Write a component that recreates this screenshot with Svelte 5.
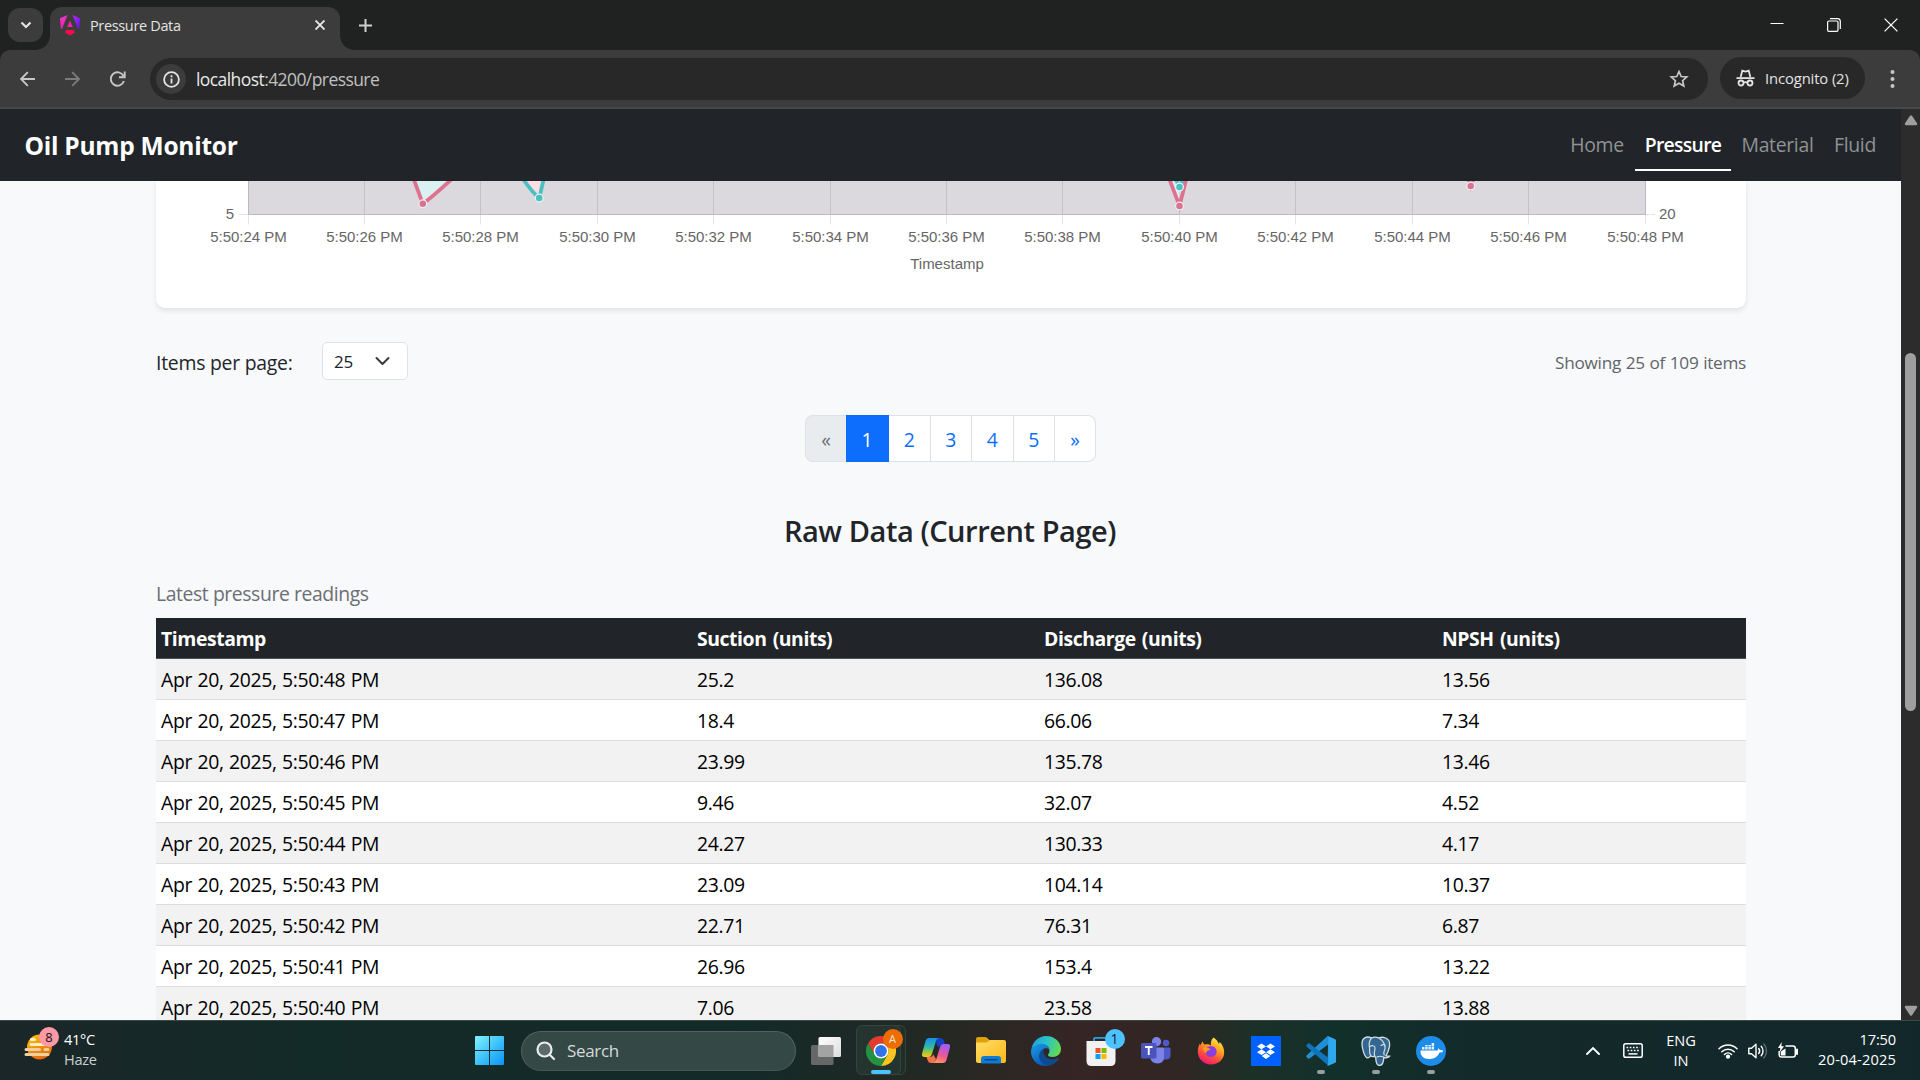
<script>
  const rows = [
    ['Apr 20, 2025, 5:50:48 PM', '25.2', '136.08', '13.56'],
    ['Apr 20, 2025, 5:50:47 PM', '18.4', '66.06', '7.34'],
    ['Apr 20, 2025, 5:50:46 PM', '23.99', '135.78', '13.46'],
    ['Apr 20, 2025, 5:50:45 PM', '9.46', '32.07', '4.52'],
    ['Apr 20, 2025, 5:50:44 PM', '24.27', '130.33', '4.17'],
    ['Apr 20, 2025, 5:50:43 PM', '23.09', '104.14', '10.37'],
    ['Apr 20, 2025, 5:50:42 PM', '22.71', '76.31', '6.87'],
    ['Apr 20, 2025, 5:50:41 PM', '26.96', '153.4', '13.22'],
    ['Apr 20, 2025, 5:50:40 PM', '7.06', '23.58', '13.88']
  ];
  const headers = ['Timestamp', 'Suction (units)', 'Discharge (units)', 'NPSH (units)'];
  const pages = ['«', '1', '2', '3', '4', '5', '»'];
  const links = ['Home', 'Pressure', 'Material', 'Fluid'];
  const ticks = Array.from({ length: 13 }, (_, i) => ({
    x: 92.5 + Math.floor(116.42 * i),
    label: `5:50:${24 + i * 2} PM`
  }));
</script>

<div class="screen">
  <div class="tabstrip">
    <div class="tabsearch">
      <svg width="12" height="8" viewBox="0 0 12 8"><path d="M1.5 1.5 6 6l4.500-4.500" fill="none" stroke="#e3e3e3" stroke-width="2.200" /></svg>
    </div>
    <div class="tab">
      <svg class="fav" width="20" height="21" viewBox="0 0 20 21">
        <defs>
          <linearGradient id="ngl" x1="0" y1="0" x2=".6" y2="1"><stop offset="0" stop-color="#f637e3" /><stop offset="1" stop-color="#e91e9c" /></linearGradient>
          <linearGradient id="ngr" x1="0" y1="0" x2="1" y2="1"><stop offset="0" stop-color="#b32df5" /><stop offset="1" stop-color="#5c13f0" /></linearGradient>
        </defs>
        <path d="M7.500 0 2 14 .8 13 0 3.300Z" fill="url(#ngl)" />
        <path d="M12.500 0 18 14 19.200 13 20 3.300Z" fill="url(#ngr)" />
        <path d="M10 5.500 7.200 12h5.600Z" fill="#f0249f" />
        <path d="M6.300 15h7.400l1.300 2.500-5 3-5-3Z" fill="#ff0a4d" />
      </svg>
      <span>Pressure Data</span>
      <svg class="tabx" width="10" height="10" viewBox="0 0 10 10"><path d="M.5.5l9 9M9.500.5l-9 9" stroke="#e8e8e8" stroke-width="1.900" /></svg>
    </div>
    <svg class="plus" width="13" height="13" viewBox="0 0 13 13"><path d="M6.500 0v13M0 6.500h13" stroke="#d0d0d0" stroke-width="2" /></svg>
    <div class="winctl">
      <svg width="14" height="14" viewBox="0 0 14 14"><path d="M.5 5.500h13" stroke="#fff" stroke-width="1" /></svg>
      <svg width="14" height="14" viewBox="0 0 14 14" fill="none" stroke="#fff" stroke-width="1.200"><rect x=".6" y="3" width="10.400" height="10.400" rx="1.300" /><path d="M3 .7h7.500a2.800 2.800 0 0 1 2.800 2.800V11" /></svg>
      <svg width="14" height="14" viewBox="0 0 14 14"><path d="M.6.6l12.800 12.800M13.400.6.6 13.400" stroke="#fff" stroke-width="1.300" /></svg>
    </div>
  </div>

  <div class="toolbar">
    <svg width="16" height="16" viewBox="0 0 16 16" fill="none" stroke="#c7c7c7" stroke-width="1.900"><path d="M15 8H1M7.800 1.200 1 8l6.800 6.800" /></svg>
    <svg width="16" height="16" viewBox="0 0 16 16" fill="none" stroke="#7b7b7b" stroke-width="1.900"><path d="M0 8h14M7.200 1.200 14 8l-6.800 6.800" /></svg>
    <svg width="16" height="16" viewBox="0 0 16 16" fill="none" stroke="#c7c7c7" stroke-width="1.900"><path d="M13.900 10A6.700 6.700 0 1 1 13.500 5M14.700 .5v5.700H9" /></svg>
    <div class="omnibox">
      <div class="info">
        <svg width="17" height="17" viewBox="0 0 17 17"><circle cx="8.500" cy="8.500" r="7.400" fill="none" stroke="#e3e3e3" stroke-width="1.800" /><path d="M8.500 7.500v5M8.500 4.300v1.900" stroke="#e3e3e3" stroke-width="1.800" /></svg>
      </div>
      <div class="url">localhost<span>:4200/pressure</span></div>
      <svg class="star" width="20" height="20" viewBox="0 0 20 20"><path d="M10 2.500l2.200 5 5.600.5-4.200 3.700 1.200 5.400L10 14.300l-4.800 2.800 1.200-5.400L2.200 8l5.600-.5Z" fill="none" stroke="#c7c7c7" stroke-width="1.700" /></svg>
    </div>
    <div class="incog">
      <svg width="19" height="18" viewBox="0 0 19 18" fill="none" stroke="#e3e3e3" stroke-width="1.800"><path d="M4.700 8 6.300 1.600 9.500 2.600l3.200-1L14.300 8" /><path d="M.5 9.100h18" /><circle cx="5" cy="14" r="2.500" /><circle cx="14" cy="14" r="2.500" /><path d="M7.500 13.600q2-1 4 0" /></svg>
      <span>Incognito (2)</span>
    </div>
    <svg class="dots" width="5" height="20" viewBox="0 0 5 20" fill="#c7c7c7"><circle cx="2.500" cy="3" r="2" /><circle cx="2.500" cy="10" r="2" /><circle cx="2.500" cy="17" r="2" /></svg>
  </div>

  <div class="page">
    <div class="view">
      <nav>
        <div class="brand">Oil Pump Monitor</div>
        <div class="links">
          {#each links as l}
            <a class={l.toLowerCase()} class:on={l === 'Pressure'}>{l}</a>
          {/each}
        </div>
      </nav>
      <main>
        <section class="card">
          <svg width="1590" height="127" viewBox="0 0 1590 127">
            <rect x="92.500" y="0" width="1397" height="33.500" fill="#dbd8de" />
            <path d="M258-1 266.800 22.800 297-1Z" fill="#d9f1f0" />
            <path d="M367-1 383.200 17 388.500-1Z" fill="#ffdfe5" />
            <path d="M1014-1 1023.500 24 1031-1Z" fill="#d9f1f0" />
            {#each ticks as t}
              <path d="M{t.x} 0V43.500" stroke="#000" stroke-opacity=".1" />
              <text x={t.x} y="61" text-anchor="middle">{t.label}</text>
            {/each}
            <path d="M82.500 33.500h1416.500" stroke="#000" stroke-opacity=".1" />
            <path d="M92.500 0V33.500H1489.500V0" fill="none" stroke="#babac0" />
            <g fill="none" stroke="#4bc0c0" stroke-width="3.750">
              <path d="M366.500-3Q375 10 383.200 17L388-3" />
              <path d="M1019-3 1023.500 6 1028-3" />
            </g>
            <g fill="none" stroke="#e0708f" stroke-width="3.750">
              <path d="M257.700-2 266.800 22.800Q275 17 297-3" />
              <path d="M1013-3 1023.500 25 1030.500-3" />
              <path d="M1312-3 1314.700 5 1317.500-3" />
            </g>
            <g stroke="#e6f4f4" stroke-width="1.250">
              <circle cx="266.800" cy="22.800" r="3.900" fill="#e0708f" />
              <circle cx="383.200" cy="17" r="3.900" fill="#4bc0c0" />
              <circle cx="1023.500" cy="6" r="3.900" fill="#4bc0c0" />
              <circle cx="1023.500" cy="25" r="3.900" fill="#e0708f" />
              <circle cx="1314.700" cy="5" r="3.900" fill="#e0708f" />
            </g>
            <text x="78" y="38" text-anchor="end">5</text>
            <text x="1503" y="38">20</text>
            <text x="791" y="88" text-anchor="middle">Timestamp</text>
          </svg>
        </section>

        <div class="controls">
          <span class="ipp">Items per page:</span>
          <div class="select">
            <span>25</span>
            <svg width="15" height="10" viewBox="0 0 15 10"><path d="M1.500 2l6 6 6-6" fill="none" stroke="#343a40" stroke-width="2" stroke-linecap="round" stroke-linejoin="round" /></svg>
          </div>
          <span class="showing">Showing 25 of 109 items</span>
        </div>

        <div class="pager">
          {#each pages as p, i}
            <div class="pg" class:disabled={i === 0} class:active={i === 1}>{p}</div>
          {/each}
        </div>

        <h4>Raw Data (Current Page)</h4>
        <div class="caption">Latest pressure readings</div>

        <div class="table">
          <div class="row head">
            {#each headers as h}<div>{h}</div>{/each}
          </div>
          {#each rows as r}
            <div class="row">
              {#each r as c}<div>{c}</div>{/each}
            </div>
          {/each}
        </div>
      </main>
    </div>
    <div class="scroll">
      <svg width="14" height="11" viewBox="0 0 14 11"><path d="M7 1.500 12 9H2Z" fill="#9f9f9f" stroke="#9f9f9f" stroke-width="2.400" stroke-linejoin="round" /></svg>
      <div class="thumb"></div>
      <svg width="14" height="11" viewBox="0 0 14 11"><path d="M7 9.500 12 2H2Z" fill="#9f9f9f" stroke="#9f9f9f" stroke-width="2.400" stroke-linejoin="round" /></svg>
    </div>
  </div>

  <footer>
    <div class="weather">
      <svg width="32" height="36" viewBox="0 0 32 36">
        <defs><linearGradient id="sun" x1="0" y1="0" x2=".5" y2="1"><stop offset="0" stop-color="#fdc50a" /><stop offset="1" stop-color="#ea6a0c" /></linearGradient></defs>
        <circle cx="15.500" cy="22" r="12.500" fill="url(#sun)" />
        <g stroke-width="3" stroke-linecap="round"><path d="M7.500 14.500h3M7 19.500h21" stroke="#fff0c4" /><path d="M2 24.500h13.500M21 24.500h3M2 29.500h22" stroke="#ecd0a0" /></g>
      </svg>
      <div class="wbadge">8</div>
      <div class="wtext"><div>41°C</div><div class="dim">Haze</div></div>
    </div>

    <div class="center">
      <svg class="win" width="29" height="29" viewBox="0 0 29 29">
        <defs><linearGradient id="wg" x1="0" y1="0" x2="29" y2="29" gradientUnits="userSpaceOnUse"><stop offset="0" stop-color="#84f3ff" /><stop offset=".5" stop-color="#3fc3fb" /><stop offset="1" stop-color="#0a93f6" /></linearGradient></defs>
        <path d="M1 0h13v14H0V1q0-1 1-1ZM15 0h13q1 0 1 1v13H15ZM0 15h14v14H1q-1 0-1-1ZM15 15h14v13q0 1-1 1H15Z" fill="url(#wg)" />
      </svg>
      <div class="search">
        <svg width="20" height="20" viewBox="0 0 20 20" fill="none" stroke="#e9eceb" stroke-width="2.200" stroke-linecap="round"><circle cx="8.500" cy="8.500" r="7" fill="#5b6b69" /><path d="M13.500 13.500 18 18" /></svg>
        <span>Search</span>
      </div>

      <div class="slot">
        <svg width="30" height="28" viewBox="0 0 30 28">
          <defs><linearGradient id="tv" x1="0" y1="0" x2="1" y2="1"><stop offset="0" stop-color="#fff" /><stop offset="1" stop-color="#dcdcdc" /></linearGradient></defs>
          <rect x="0" y="8" width="22.500" height="20" rx="1.500" fill="#666767" /><rect x="7.500" y="0" width="22.500" height="20" rx="1.500" fill="url(#tv)" /><path d="M7.500 8h15v12h-15Z" fill="#a2a3a3" />
        </svg>
      </div>

      <div class="slot chrome">
        <div class="stack"></div>
        <div class="plate"></div>
        <svg width="30" height="30" viewBox="0 0 30 30">
          <path d="M2 7.500A15 15 0 0 1 28 7.500H15A7.500 7.500 0 0 0 8.500 18.700Z" fill="#e33b2e" />
          <path d="M28 7.500A15 15 0 0 1 15 30L21.500 18.700A7.500 7.500 0 0 0 15 7.500Z" fill="#fcc31e" />
          <path d="M15 30A15 15 0 0 1 2 7.500L8.500 18.700A7.500 7.500 0 0 0 21.500 18.700Z" fill="#229342" />
          <circle cx="15" cy="15" r="7.500" fill="#fff" /><circle cx="15" cy="15" r="5.900" fill="#2f72ea" />
        </svg>
        <div class="obadge">A</div>
        <div class="bar"></div>
      </div>

      <div class="slot">
        <svg width="30" height="28" viewBox="0 0 30 28">
          <defs>
            <linearGradient id="cp1" x1="0" y1="0" x2="0" y2="1"><stop offset="0" stop-color="#178fe8" /><stop offset=".45" stop-color="#2bb6b0" /><stop offset=".75" stop-color="#9cc83c" /><stop offset="1" stop-color="#fdc417" /></linearGradient>
            <linearGradient id="cp2" x1=".3" y1="0" x2="0" y2="1"><stop offset="0" stop-color="#a85bf0" /><stop offset=".5" stop-color="#ee5792" /><stop offset="1" stop-color="#fba552" /></linearGradient>
          </defs>
          <path d="M16 1h3.500q2.500 0 3.300 2.600L24 8h-3q-2.500 0-3.300 2.500L15 6Z" fill="#1740c4" />
          <path d="M14 26H10q-2.500 0-3.300-2.600L5.500 20H9q2.500 0 3.300-2.500L15 22Z" fill="#f2724e" />
          <path d="M8 1h10q-2 0-3 3l-4.200 13.500Q10 20 7.500 20H3.500Q0 20 1.200 16L4.500 4Q5.500 1 8 1Z" fill="url(#cp1)" />
          <path d="M22 26H12q2 0 3-3l4.200-13.500Q20 7 22.500 7h4Q30 7 28.800 11L25.500 23Q24.500 26 22 26Z" fill="url(#cp2)" />
        </svg>
      </div>

      <div class="slot">
        <svg width="30" height="27" viewBox="0 0 30 27">
          <defs><linearGradient id="fo" x1="0" y1="0" x2="1" y2="1"><stop offset="0" stop-color="#ffdd68" /><stop offset="1" stop-color="#fbb917" /></linearGradient></defs>
          <path d="M0 2q0-2 2-2h7q1.200 0 2 .8L13.500 3H28v6H0Z" fill="#dea10b" />
          <path d="M0 5.500h10q1 0 2-1L13 3.600q.8-.6 1.800-.6H28q2 0 2 2v19q0 2-2 2H2q-2 0-2-2Z" fill="url(#fo)" />
          <path d="M5 26.500V22q0-3 3-3h14q3 0 3 3v4.500Z" fill="#0f7bd2" /><path d="M9 22.700h12" stroke="#0a4a94" stroke-width="1.500" stroke-linecap="round" />
        </svg>
      </div>

      <div class="slot">
        <svg width="30" height="30" viewBox="0 0 30 30">
          <defs>
            <linearGradient id="ed1" x1="0" y1=".2" x2="1" y2=".5"><stop offset="0" stop-color="#1f9fe0" /><stop offset=".5" stop-color="#2ac3c8" /><stop offset="1" stop-color="#62db4e" /></linearGradient>
            <linearGradient id="ed2" x1="0" y1="0" x2=".6" y2="1"><stop offset="0" stop-color="#1b9de2" /><stop offset="1" stop-color="#0a58b8" /></linearGradient>
          </defs>
          <path d="M.5 12.500C2 5 8 0 15 0c9 0 15 6.500 15 13 0 5-4 8-8.500 8-3 0-4.500-1-4.500-2s1.500-1.500 1.500-4.500c0-3-3-5.500-7-5.500C6.500 9 1.800 11 .5 12.500Z" fill="url(#ed1)" />
          <path d="M.2 13.500C1.500 10 6 7.700 10.500 7.700c5 0 8 3 8 6-1.500-1.500-4-1.700-5.500-1-3.500 1.500-4.500 5.500-3 9.500 1.200 3.800 4.500 6.500 7.500 7.500C8.500 31.500 0 25 0 15.500Z" fill="url(#ed2)" />
          <path d="M13 12.700c-3.500 1.500-6 5.500-4.500 10C10 26.500 13.500 29.500 17.500 29.700c4-.7 8-3.200 10-6.500.6-1-.3-1.500-1.200-1C19 25.500 10.500 21 13 12.700Z" fill="#0d4a8f" />
        </svg>
      </div>

      <div class="slot">
        <svg width="30" height="30" viewBox="0 0 30 30">
          <path d="M8 6V3.200Q8 1.800 9.400 1.800h11.200Q22 1.800 22 3.200V6" fill="none" stroke="#20a4e0" stroke-width="1.800" />
          <path d="M.5 5h29v20q0 5-5 5h-19q-5 0-5-5Z" fill="#f1f1f1" />
          <path d="M9.500 12h5v5h-5Z" fill="#f25022" /><path d="M15.500 12h5v5h-5Z" fill="#7fba00" /><path d="M9.500 18h5v5h-5Z" fill="#00a4ef" /><path d="M15.500 18h5v5h-5Z" fill="#ffb900" />
        </svg>
        <div class="sbadge">1</div>
      </div>

      <div class="slot">
        <svg width="30" height="27" viewBox="0 0 30 27">
          <circle cx="25" cy="6" r="3.200" fill="#5059c9" /><circle cx="15.500" cy="4.700" r="4.700" fill="#7b83eb" />
          <path d="M21 10.500h7q1.500 0 1.500 1.500v6q0 4.500-4.500 4.500H21Z" fill="#5059c9" />
          <path d="M9 10.500h12.500q1.500 0 1.500 1.500v7.500q0 7-6.500 7T9 19.500Z" fill="#7b83eb" />
          <rect x="0" y="6" width="15.500" height="15.500" rx="1.500" fill="#4b53bc" />
          <path d="M4 10h7.500M7.750 10v8" stroke="#fff" stroke-width="1.900" />
        </svg>
      </div>

      <div class="slot">
        <svg width="28" height="28" viewBox="0 0 28 28">
          <defs><linearGradient id="ff" x1=".8" y1="0" x2=".3" y2="1"><stop offset="0" stop-color="#fff04a" /><stop offset=".4" stop-color="#ffa01e" /><stop offset=".7" stop-color="#ff4b3c" /><stop offset="1" stop-color="#ef1680" /></linearGradient></defs>
          <path d="M16.500.5c3 2 4.500 4 5.300 6.500.7-.7.800-1.500.7-2.300C26 8 27.200 12 27.200 15.500c0 7-6 12-13.200 12S.8 22 .8 14.800C.8 11 2 8 3 6.500L3.300 9c.5-2 1.500-3.500 2.700-4.500 0 1.500.5 2.500 1.500 3 3-.5 5 0 6.500 1C13.500 6 14 2.500 16.500.5Z" fill="url(#ff)" />
          <circle cx="14" cy="14.500" r="5.600" fill="#8a3fe0" /><path d="M6 10.500c4-1 5 1 7.500 1.300-.5 2-3.500 1.200-4.300 3.700-.5 1.500-3-1-3.200-5Z" fill="#ff9a1c" />
        </svg>
      </div>

      <div class="slot">
        <svg width="30" height="30" viewBox="0 0 30 30"><rect width="30" height="30" fill="#0061fe" /><path d="M10.500 7.500 6 10.400l4.500 2.900 4.500-2.900ZM19.500 7.500 15 10.400l4.500 2.900 4.500-2.900ZM10.500 13.300 6 16.200l4.500 2.900 4.500-2.900ZM19.500 13.300 15 16.200l4.500 2.900 4.500-2.900ZM15 17.300l-4.300 2.800L15 22.900l4.300-2.800Z" fill="#fff" /></svg>
      </div>

      <div class="slot">
        <svg width="30" height="30" viewBox="0 0 30 30">
          <path d="M21.500 0 29 3.300q1 .5 1 1.500v20.400q0 1-1 1.500L21.500 30 22 8.500 3.500 22.600q-.8.500-1.500 0L.5 21q-.7-.8 0-1.600L21.500 0Z" fill="#1f8fd8" />
          <path d="M.5 10.600q-.7-.8 0-1.600L2 7.500q.8-.5 1.500 0L22 21.500V29.500Z" fill="#1173b8" />
          <path d="M21.500 0 29 3.300q1 .5 1 1.500v20.400q0 1-1 1.500L21.500 30Q22.300 29 22.300 28V2Q22.300.8 21.500 0Z" fill="#2da7ee" />
        </svg>
        <div class="dot"></div>
      </div>

      <div class="slot">
        <svg width="30" height="30" viewBox="0 0 30 30" stroke-linejoin="round" stroke-linecap="round">
          <path d="M10.500 2C6-.2 1.300 1.300 1 7c-.2 4 2 13.500 5 14.800 1.500.6 2.700-.8 3.700-2 1.300 1 2.800 1 4 .3l1 1.500c.5 3-.2 7.700 3.800 7.900 4 .1 4-4.500 4.300-8 2.500.6 4.700.1 6-1.400-1.500.3-2.800.2-3.800-.4 2.500-4 5.200-12 2.500-15.500C24.800.8 20.500.8 18 2 15.700 1 12.500 1 10.500 2Z" fill="#336791" stroke="#d3dce2" stroke-width="1.300" />
          <path d="M10.500 2C7.700 5 8 9 8.500 12c.4 3-.5 5 1.200 7.700M18 2c4 2.500 6.500 7 6 10.500-.4 2.500-2 3-.8 6.500M9 10.500c2-1.500 5-1 5 1.500 0 3-1.500 4.500-.3 8M20 9.500q2-1.500 4-.5M16 21q2.500-1.500 6.500 0" fill="none" stroke="#d3dce2" stroke-width="1.200" />
        </svg>
        <div class="dot"></div>
      </div>

      <div class="slot">
        <svg width="30" height="30" viewBox="0 0 30 30">
          <circle cx="15" cy="15" r="15" fill="#1d8ce8" />
          <path d="M4.500 14.500H21c1.200-.2 1.500-1 1.200-2.200.8.200 1.500 1 1.600 1.900 1.200-.3 2.700 0 3.400.7-.6 1.200-2 1.700-3.700 1.600C21.500 21 18 23 13 23c-5.500 0-8.700-3-8.500-8.500Z" fill="#fff" />
          <path d="M6 11h2.500v2.500H6ZM9.200 11h2.500v2.500H9.200ZM12.400 11h2.500v2.500h-2.500ZM15.600 11h2.500v2.500h-2.500ZM9.200 9h2.500v1.500H9.200ZM12.400 9h2.500v1.500h-2.500ZM15.600 7h2.500v3.500h-2.500Z" fill="#e4f1fd" />
        </svg>
        <div class="dot"></div>
      </div>
    </div>

    <div class="tray">
      <svg class="up" width="14" height="9" viewBox="0 0 14 9"><path d="M1 8l6-6 6 6" fill="none" stroke="#fff" stroke-width="1.900" stroke-linecap="round" /></svg>
      <svg class="kb" width="20" height="15" viewBox="0 0 20 15" fill="none" stroke="#fff"><rect x=".8" y=".8" width="18.400" height="13.400" rx="1.800" stroke-width="1.500" /><path d="M3.500 4.500h13M4.500 7.500h12" stroke-width="1.700" stroke-dasharray="1.700 1.500" /><path d="M5.500 10.900h9" stroke-width="1.500" /></svg>
      <div class="lang">ENG<br />IN</div>
      <svg class="wifi" width="20" height="16" viewBox="0 0 20 16" fill="none" stroke="#fff" stroke-width="1.500" stroke-linecap="round"><path d="M1 5.800a12.700 12.700 0 0 1 18 0M3.800 8.800a8.800 8.800 0 0 1 12.400 0M6.500 11.500a5 5 0 0 1 7 0" /><circle cx="10" cy="13.700" r="1.400" fill="#fff" /></svg>
      <svg class="vol" width="20" height="18" viewBox="0 0 20 18" fill="none" stroke="#fff" stroke-width="1.400" stroke-linecap="round" stroke-linejoin="round"><path d="M.8 6.200h2.700L8 2.200v13.600L3.500 11.800H.8Z" /><path d="M10.700 6.500a4 4 0 0 1 0 5M13.200 4.200a7.300 7.300 0 0 1 0 9.600" /><path d="M15.800 2a10.500 10.500 0 0 1 0 14" stroke="#5d6e6e" /></svg>
      <svg class="bat" width="21" height="18" viewBox="0 0 21 18"><path d="M7.500 4H15q2.300 0 2.300 2.300v6.400q0 2.300-2.300 2.300H3.500q-2.300 0-2.300-2.300V9" fill="none" stroke="#fff" stroke-width="1.500" /><path d="M19 7.500v4.500" stroke="#fff" stroke-width="2" stroke-linecap="round" /><path d="M2.800 9.500 7.500 6.500V13.500H3.500q-.7 0-.7-.7Z" fill="#fff" /><path d="M3.700 0 0 6h2.300L1.700 10.200 6 4.200H3.400Z" fill="#fff" /></svg>
      <div class="clock">17:50<br /><span>20-04-2025</span></div>
    </div>
  </footer>
</div>

<style>
  :global(body) { background: #202221; overflow: hidden; }
  .screen {
    width: 1920px; height: 1080px; display: flex; flex-direction: column; overflow: hidden;
    font-family: "Open Sans", "Noto Sans", sans-serif; letter-spacing: -0.02em; background: #202221;
  }
  .screen * { box-sizing: border-box; }
  svg { display: block; flex: none; }
  span, .brand, a, h4, .caption, .row div, .url { white-space: nowrap; }

  .tabstrip { height: 50px; flex: none; display: flex; align-items: center; padding-left: 8px; background: #202221; }
  .tabsearch { width: 35px; height: 34px; border-radius: 12px; background: #3c3c3c; display: grid; place-items: center; }
  .tab {
    position: relative; align-self: flex-end; margin-left: 7px; width: 290px; height: 43px; border-radius: 12px 12px 0 0;
    background: #3c3c3c; display: flex; align-items: center; padding: 0 15px 7px 10px; color: #e3e3e3; font-size: 14.500px;
  }
  .tab::before, .tab::after { content: ""; position: absolute; bottom: 0; width: 14px; height: 14px; }
  .tab::before { left: -14px; background: radial-gradient(circle at 0 0, transparent 13.500px, #3c3c3c 14px); }
  .tab::after { right: -14px; background: radial-gradient(circle at 100% 0, transparent 13.500px, #3c3c3c 14px); }
  .tab span { margin-left: 10px; letter-spacing: -0.024em; }
  .tabx { margin-left: auto; }
  .plus { margin-left: 19px; }
  .winctl { margin-left: auto; display: flex; gap: 43px; padding-right: 22px; }

  .toolbar {
    height: 59px; flex: none; display: flex; align-items: center; background: #3c3c3c; border-bottom: 2px solid #484848;
    border-radius: 10px 10px 0 0; padding-left: 20px; gap: 29px;
  }
  .omnibox { width: 1558px; height: 42px; border-radius: 21px; background: #282828; display: flex; align-items: center; padding: 0 19px 0 6px; margin-left: -5px; margin-top: 1px; }
  .info { width: 30px; height: 30px; border-radius: 50%; background: #3c3c3c; display: grid; place-items: center; }
  .url { margin-left: 10px; color: #e8e8e8; font-size: 17.500px; letter-spacing: -0.033em; }
  .url span { color: #c0c0c0; }
  .star { margin-left: auto; }
  .incog { width: 145px; height: 42px; border-radius: 21px; background: #282828; display: flex; align-items: center; padding-left: 16px; gap: 10px; color: #e3e3e3; font-size: 14.800px; letter-spacing: -0.008em; margin-left: -17px; margin-top: -1px; }
  .dots { margin-left: -4px; }

  .page { height: 911px; flex: none; display: flex; }
  .view { width: 1901px; height: 911px; overflow: hidden; background: #f8f9fb; }
  nav { height: 72px; background: #212529; display: flex; justify-content: space-between; padding: 0 15px 0 24.500px; }
  .brand { color: #fff; font-weight: 700; font-size: 24.500px; line-height: 73px; letter-spacing: -0.01em; }
  .links { display: flex; font-size: 19.400px; margin-right: 0; }
  .links a { color: #909294; height: 62px; line-height: 72px; text-align: center; }
  .home { width: 78px; } .pressure { width: 96px; } .material { width: 93px; } .fluid { width: 62px; }
  .links a.on { color: #fff; font-weight: 600; border-bottom: 2px solid #fff; letter-spacing: -0.036em; }
  .home { margin-right: -1px; }

  main { width: 1590px; margin-left: 156px; color: #212529; font-size: 19.400px; }
  .card { height: 127px; background: #fff; border-radius: 0 0 9px 9px; box-shadow: 0 2.500px 5px rgba(0, 0, 0, .09); }
  .card text { font: 15px "Liberation Sans", Arial, sans-serif; fill: #666; letter-spacing: 0; }

  .controls { margin-top: 34px; height: 38px; display: flex; align-items: center; }
  .ipp { width: 166px; padding-top: 2px; letter-spacing: -0.013em; }
  .select { width: 86px; height: 38px; border: 1px solid #dee2e6; border-radius: 5px; background: #fff; display: flex; align-items: center; justify-content: space-between; padding: 0 17px 0 11px; font-size: 17px; }
  .showing { margin-left: auto; padding-top: 2px; font-size: 17.200px; letter-spacing: -0.016em; word-spacing: .03em; color: #60656a; }

  .pager { display: flex; justify-content: center; margin-top: 35px; height: 47px; padding-right: 1px; }
  .pg { width: 41.500px; border: 1px solid #dee2e6; border-left: 0; background: #fff; color: #0d6efd; display: grid; place-items: center; padding-top: 1px; }
  .pg:first-child { border-left: 1px solid #dee2e6; border-radius: 8px 0 0 8px; width: 41px; }
  .pg:last-child { border-radius: 0 8px 8px 0; width: 41px; }
  .pg.disabled { background: #e9ecef; color: #6c7074; border-right: 0; }
  .pg.active { width: 43px; background: #0d6efd; color: #fff; border-color: #0d6efd; }

  h4 { margin: 50px 0 0; height: 38px; line-height: 38px; text-align: center; font-weight: 600; font-size: 29px; letter-spacing: -0.015em; padding-right: 2px; }
  .caption { margin-top: 29px; height: 39px; line-height: 30px; color: #6b6f73; letter-spacing: -0.022em; }
  .row { display: grid; grid-template-columns: 536px 347px 398px 309px; height: 41px; line-height: 42px; border-bottom: 1px solid #dcdddd; background: #fff; color: #000; padding-left: 5px; width: 1590px; word-spacing: .03em; }
  .row:nth-child(even) { background: #f2f2f2; }
  .row.head { background: #212529; color: #fff; font-weight: 700; border-color: #4d5154; word-spacing: .08em; letter-spacing: -0.022em; }

  .scroll { width: 19px; background: #2c2c2c; display: flex; flex-direction: column; align-items: center; justify-content: space-between; padding: 6px 0 4px; }
  .thumb { width: 11px; height: 358px; border-radius: 6px; background: #9f9f9f; margin-bottom: 67px; }

  footer {
    height: 60px; flex: none; position: relative; display: flex; color: #fff; font-size: 14.600px; line-height: 20px; border-top: 1px solid #3b4947;
    background: linear-gradient(90deg, #1b2628 0, #132b28 300px, #142a28 750px, #252823 950px, #362525 1080px, #302622 1180px, #1c3028 1250px, #12302a 1330px, #132a2b 1480px, #12272a 100%);
  }
  .weather { position: relative; width: 474px; display: flex; padding: 4px 0 0 24px; }
  .wbadge, .obadge, .sbadge { position: absolute; width: 20px; height: 20px; border-radius: 50%; text-align: center; line-height: 20px; letter-spacing: 0; }
  .wbadge { left: 39px; top: 6px; background: #ff99a4; color: #111; font-size: 13px; }
  .wtext { margin: 4px 0 0 8px; letter-spacing: -0.02em; }
  .dim { color: #c9cfce; }
  .center { display: flex; align-items: center; }
  .win { margin-left: 1px; }
  .search { width: 275px; height: 40px; margin-left: 17px; border-radius: 20px; background: #344845; border: 1px solid #52625f; border-bottom-color: #44544f; display: flex; align-items: center; padding-left: 14px; gap: 11px; font-size: 17px; color: #d5dad9; }
  .center .slot:nth-child(3) { margin-left: 2.500px; }
  .slot { position: relative; width: 55px; height: 59px; display: grid; place-items: center; }
  .slot > svg { position: relative; }
  .stack, .plate { position: absolute; top: 4px; height: 50px; border: 1px solid #35443f; border-radius: 6px; }
  .plate { left: 2px; width: 45px; background: #26342f; }
  .stack { left: 10px; width: 42px; background: #202e2a; }
  .obadge { left: 29px; top: 8px; background: #ee6c05; color: #ffe6d0; font-size: 11px; }
  .sbadge { left: 31px; top: 8px; background: #4cc2ff; color: #12222c; font-size: 14px; }
  .bar { position: absolute; left: 17.500px; top: 49px; width: 20px; height: 4px; border-radius: 2px; background: #4cc2ff; }
  .dot { position: absolute; left: 23.500px; top: 49px; width: 8px; height: 4px; border-radius: 2px; background: #9a9f9e; }
  .tray { margin-left: auto; display: flex; align-items: center; padding-right: 24px; }
  .kb { margin-left: 23px; }
  .lang { margin-left: 17px; width: 42px; text-align: center; letter-spacing: 0; padding-bottom: 2px; }
  .wifi { margin-left: 16px; }
  .vol { margin-left: 10px; }
  .bat { margin-left: 10px; }
  .clock { width: 97px; text-align: right; padding-bottom: 3px; letter-spacing: -0.01em; }
  .clock span { letter-spacing: 0.012em; }
</style>
